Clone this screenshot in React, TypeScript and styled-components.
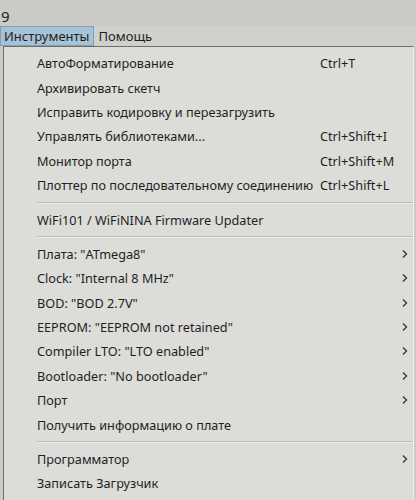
import styled, { createGlobalStyle } from 'styled-components'

const GlobalStyle = createGlobalStyle`
  html, body {
    margin: 0;
    padding: 0;
    background: #c9c9c5;
    font-family: "Noto Sans", "Open Sans", sans-serif;
    color: #1f1f1f;
  }
`

const Window = styled.div`
  width: 416px;
  height: 500px;
  overflow: hidden;
  background: #cacac6;
`

const TitleRow = styled.div`
  height: 26px;
  padding-left: 1px;
  font-size: 15px;
  line-height: 32px;
  color: #222;
`

const MenuBar = styled.div`
  display: flex;
  height: 20px;
  background: #d0d0cc;
`

const MenuTitle = styled.div<{ $active?: boolean }>`
  display: flex;
  align-items: center;
  padding: 0 4px 0 3px;
  font-size: 13px;
  box-sizing: border-box;
  background: ${({ $active }) => ($active ? '#a6c2d4' : 'transparent')};
  border: 1px solid ${({ $active }) => ($active ? '#7d9fb8' : 'transparent')};
`

const Dropdown = styled.div`
  margin-left: 3px;
  width: 409px;
  border: 1px solid #6e6e6c;
  border-right-color: #eeeeea;
  border-bottom: none;
  background: #dcdcd8;
  padding-top: 4px;
  padding-bottom: 20px;
`

const Row = styled.div`
  display: grid;
  grid-template-columns: 283px 1fr 16px;
  align-items: center;
  height: 24.4px;
  padding-left: 33px;
  font-size: 12.7px;
  white-space: nowrap;
`

const Label = styled.span``

const Shortcut = styled.span`
  font-size: 12.7px;
`

const Arrow = styled.span`
  display: flex;
  align-items: center;
  justify-content: center;
`

const Separator = styled.div`
  height: 10px;
  display: flex;
  align-items: center;
  padding-left: 33px;

  &::after {
    content: '';
    flex: 1;
    height: 1px;
    background: #bdbdb9;
    box-shadow: 0 1px 0 #ececea;
  }
`

const Chevron = () => (
  <svg width="6" height="10" viewBox="0 0 6 10">
    <path d="M1 1.5 L4.5 5 L1 8.5" fill="none" stroke="#333" strokeWidth="1.3" />
  </svg>
)

type Item = { label: string; shortcut?: string; sub?: boolean } | 'sep'

const items: Item[] = [
  { label: 'АвтоФорматирование', shortcut: 'Ctrl+T' },
  { label: 'Архивировать скетч' },
  { label: 'Исправить кодировку и перезагрузить' },
  { label: 'Управлять библиотеками...', shortcut: 'Ctrl+Shift+I' },
  { label: 'Монитор порта', shortcut: 'Ctrl+Shift+M' },
  { label: 'Плоттер по последовательному соединению', shortcut: 'Ctrl+Shift+L' },
  'sep',
  { label: 'WiFi101 / WiFiNINA Firmware Updater' },
  'sep',
  { label: 'Плата: "ATmega8"', sub: true },
  { label: 'Clock: "Internal 8 MHz"', sub: true },
  { label: 'BOD: "BOD 2.7V"', sub: true },
  { label: 'EEPROM: "EEPROM not retained"', sub: true },
  { label: 'Compiler LTO: "LTO enabled"', sub: true },
  { label: 'Bootloader: "No bootloader"', sub: true },
  { label: 'Порт', sub: true },
  { label: 'Получить информацию о плате' },
  'sep',
  { label: 'Программатор', sub: true },
  { label: 'Записать Загрузчик' },
]

const App = () => {
  return (
    <Window>
      <GlobalStyle />
      <TitleRow>9</TitleRow>
      <MenuBar>
        <MenuTitle $active>Инструменты</MenuTitle>
        <MenuTitle>Помощь</MenuTitle>
      </MenuBar>
      <Dropdown>
        {items.map((item, i) =>
          item === 'sep' ? (
            <Separator key={i} />
          ) : (
            <Row key={i}>
              <Label>{item.label}</Label>
              <Shortcut>{item.shortcut}</Shortcut>
              <Arrow>{item.sub && <Chevron />}</Arrow>
            </Row>
          )
        )}
      </Dropdown>
    </Window>
  )
}

export default App
